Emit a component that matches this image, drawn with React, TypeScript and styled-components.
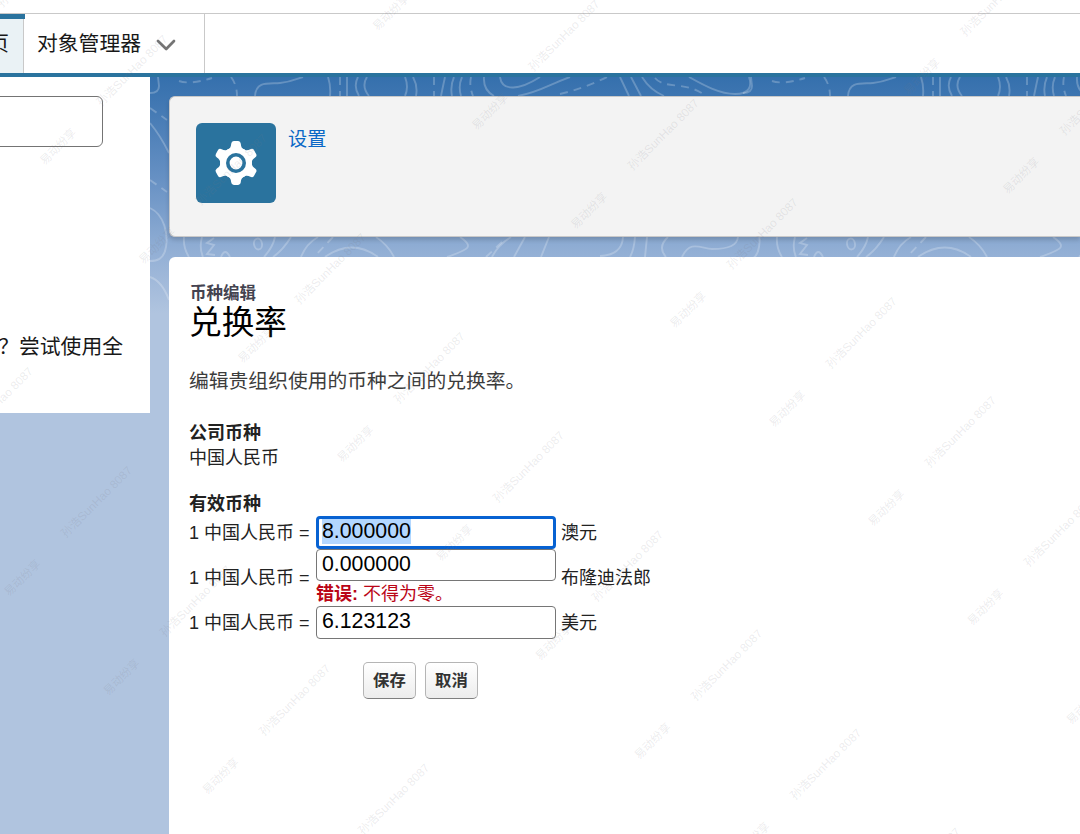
import React from 'react';
import styled, { createGlobalStyle, css } from 'styled-components';

const sans = '"Liberation Sans", "Noto Sans CJK SC", sans-serif';

const GlobalStyle = createGlobalStyle`
  * { box-sizing: border-box; }
  body {
    margin: 0;
    background: #fff;
    color: #181818;
    font-family: ${sans};
    overflow: hidden;
  }
`;

const Page = styled.div`
  position: relative;
  width: 1080px;
  height: 834px;
  display: flex;
  flex-direction: column;
  overflow: hidden;
`;

const TopStrip = styled.div`
  flex: none;
  height: 13px;
  background: #fff;
`;

const TabBar = styled.nav`
  flex: none;
  display: flex;
  height: 64px;
  border-top: 1px solid #c9c9c9;
  border-bottom: 4px solid #2a739e;
  background: #fff;
`;

const Tab = styled.div<{ $active?: boolean }>`
  display: flex;
  align-items: center;
  border-right: 1px solid #c9c9c9;
  font-size: 20.8px;
  line-height: 30px;
  white-space: nowrap;
  ${(p) =>
    p.$active
      ? css`
          position: relative;
          width: 24px;
          justify-content: flex-end;
          padding-right: 14px;
          background: #eaf2f5;
          flex: none;
          &::before {
            content: '';
            position: absolute;
            top: 0;
            left: 0;
            width: 25px;
            height: 5px;
            background: #2a739e;
          }
        `
      : css`
          width: 181px;
          padding: 0 28px 0 13px;
          justify-content: space-between;
        `}
`;

const Body = styled.div`
  position: relative;
  flex: 1;
  display: flex;
  min-height: 0;
  background: linear-gradient(180deg, #3570ad 0, #4077b2 25px, #6690c3 100px, #95b1d6 180px, #b0c4df 236px, #b0c4df 100%);
`;

const Contours = styled.svg`
  position: absolute;
  left: 0;
  top: 0;
  width: 1080px;
  height: 250px;
  fill: none;
  stroke: #fff;
  stroke-opacity: 0.23;
  stroke-width: 1.9;
`;

const Sidebar = styled.aside`
  position: relative;
  flex: none;
  width: 150px;
  height: 336px;
  padding-top: 19px;
  background: #fff;
  overflow: hidden;
`;

const SearchBox = styled.div`
  width: 123px;
  height: 51px;
  margin-left: -20px;
  border: 1px solid #747474;
  border-radius: 6px;
  background: #fff;
`;

const SidebarHint = styled.p`
  margin: 184px 0 0;
  display: flex;
  justify-content: flex-end;
  padding-right: 27px;
  font-size: 20.8px;
  line-height: 32px;
  white-space: nowrap;
`;

const Main = styled.main`
  position: relative;
  flex: 1;
  display: flex;
  flex-direction: column;
  gap: 20px;
  padding: 19px 0 0 19px;
`;

const SetupHeader = styled.header`
  flex: none;
  display: flex;
  gap: 12px;
  height: 141px;
  padding: 26px;
  border: 1px solid #c9c9c9;
  border-right: 0;
  border-radius: 6px 0 0 6px;
  background: #f3f3f3;
  box-shadow: 0 3px 4px rgba(0, 0, 0, 0.16);
`;

const SetupIcon = styled.div`
  display: flex;
  align-items: center;
  justify-content: center;
  width: 80px;
  height: 80px;
  border-radius: 6px;
  background: #2a739e;
`;

const SetupLink = styled.a`
  height: 34px;
  color: #0b68c6;
  font-size: 19.2px;
  line-height: 34px;
`;

const Content = styled.section`
  flex: 1;
  padding: 25px 20px 0;
  border-radius: 6px 0 0 0;
  background: #fff;
`;

const Eyebrow = styled.h2`
  margin: 0;
  padding-left: 1px;
  color: #444350;
  font-size: 16.5px;
  line-height: 22px;
`;

const Title = styled.h1`
  margin: 0;
  color: #000;
  font-size: 32.7px;
  font-weight: 400;
  line-height: 38px;
`;

const Description = styled.p`
  margin: 25px 0 0;
  color: #3c3c3c;
  font-size: 19.8px;
  line-height: 28px;
`;

const Field = styled.div<{ $top: number }>`
  margin-top: ${(p) => p.$top}px;
  color: #222;
  font-size: 18px;
  line-height: 25px;
`;

const RateTable = styled.div`
  display: grid;
  grid-template-columns: 127px 240px auto;
  align-items: center;
  margin-top: -1px;
  color: #222;
  font-size: 18px;
  line-height: 25px;
`;

const Label = styled.span`
  padding-top: 2px;
`;

const Suffix = styled.span`
  padding: 2px 0 0 5px;
`;

const RateInput = styled.div<{ $focused?: boolean; $height: number }>`
  height: ${(p) => p.$height}px;
  padding: ${(p) => (p.$focused ? '0 3px' : '2px 5px')};
  border: ${(p) => (p.$focused ? '3px solid #0762d2' : '1px solid #767676')};
  border-radius: 4px;
  background: #fff;
  color: #000;
  font-size: 21.3px;
  line-height: 25px;
`;

const Selected = styled.span`
  display: inline-block;
  height: 25px;
  background: #b3d7ff;
`;

const ErrorText = styled.div`
  height: 25px;
  color: #ba0517;
  line-height: 27px;
`;

const Actions = styled.div`
  display: flex;
  gap: 9px;
  padding: 23px 0 0 174px;
`;

const ActionButton = styled.button`
  width: 53px;
  height: 37px;
  padding: 0 0 2px;
  border: 1px solid #b5b5b5;
  border-bottom-color: #7f7f7f;
  border-radius: 5px;
  background: linear-gradient(#fff, #ededed);
  color: #333;
  font-family: ${sans};
  font-size: 16.4px;
  font-weight: 700;
  line-height: 24px;
`;

const Watermark = styled.svg`
  position: absolute;
  inset: 0;
  width: 1080px;
  height: 834px;
  pointer-events: none;
  fill: #787884;
  fill-opacity: 0.15;
  font-family: ${sans};
`;

const TILE = 593;

const solidLines = [
  'M150,93 Q159,93 159,86 L158,77',
  'M255,96 C256,80 270,84 280,83 C292,82 296,79 303,77',
  'M328,77 Q331,86 330,96',
  'M347,77 V96',
  'M358,77 Q353,86 359,96',
  'M367,77 Q361,86 369,96',
  'M405,77 Q409,87 405,96',
  'M413,77 Q418,86 416,96',
  'M445,77 Q443,86 441,96',
  'M454,77 Q450,86 452,96',
  'M462,77 Q458,86 461,96',
  'M484,77 Q483,90 494,96',
  'M500,77 C502,92 520,90 540,77',
  'M518,96 C540,92 550,84 570,77',
  'M620,77 L629,96',
  'M631,77 L641,96',
  'M642,77 Q650,90 664,96',
  'M689,77 C705,86 720,94 735,94 C750,94 752,86 749,77',
  'M150,123 Q160,135 169,153',
  'M150,208 C165,215 168,235 166,247 C164,260 156,261 150,261',
  'M150,277 Q162,281 169,300',
  'M184,237 Q183,248 189,257',
  'M202,237 Q199,248 203,257',
  'M214,238 L207,243 L214,245 L207,254 L215,255',
  'M221,257 Q225,247 230,257',
  'M275,237 Q273,247 264,257',
  'M291,237 Q283,250 273,257',
  'M318,237 Q306,244 301,257',
  'M325,257 Q352,238 378,257',
  'M376,237 Q388,245 394,257',
  'M460,237 C476,248 466,250 447,257',
  'M511,237 Q498,245 492,257',
  'M525,237 L514,257',
  'M549,237 L541,257',
  'M623,237 Q622,255 600,256',
  'M635,237 Q634,250 630,257',
  'M647,237 L645,257',
  'M668,237 Q657,247 666,257',
  'M682,257 C690,240 700,248 712,249 C730,249 737,245 738,237',
];

const dashedLines = [
  'M179,81 Q190,85 212,78',
  'M231,77 Q237,85 237,96',
  'M340,77 V96',
  'M434,77 V96',
  'M471,77 Q469,86 473,96',
  'M560,94 Q585,88 607,77',
  'M655,78 C665,90 685,80 706,96',
  'M150,108 L167,120',
  'M150,180 L167,192',
  'M333,237 L314,257',
  'M502,242 L486,257',
];

function ContourBackdrop() {
  return (
    <Contours viewBox="0 77 1080 250">
      <defs>
        <g id="contour-tile">
          {solidLines.map((d) => (
            <path key={d} d={d} />
          ))}
          {dashedLines.map((d) => (
            <path key={d} d={d} strokeDasharray="8 6" />
          ))}
          <ellipse cx="258" cy="244" rx="4" ry="5.5" transform="rotate(-10 258 244)" />
        </g>
      </defs>
      <use href="#contour-tile" />
      <use href="#contour-tile" x={TILE} />
    </Contours>
  );
}

interface Mark {
  x: number;
  y: number;
  size: number;
  text: string;
}

function buildMarks(): Mark[] {
  const marks: Mark[] = [];
  const origins = [
    { x: 231, y: 169.5, size: 11.7, text: '孙浩SunHao 8087' },
    { x: 256, y: 344.5, size: 11.4, text: '易动纷享' },
  ];
  for (const o of origins) {
    for (let col = -2; col <= 3; col++) {
      for (let row = -9; row <= 9; row++) {
        const x = o.x + col * 432 + row * 99.1;
        const y = o.y - col * 35 + row * 99.1;
        if (x > -38 && x < 1118 && y > -38 && y < 872) {
          marks.push({ x, y, size: o.size, text: o.text });
        }
      }
    }
  }
  return marks;
}

const marks = buildMarks();

function GearIcon() {
  const teeth = [0, 60, 120, 180, 240, 300];
  return (
    <svg width="44" height="46" viewBox="-22 -23 44 46">
      <g fill="#fff">
        {teeth.map((a) => (
          <path
            key={a}
            transform={`rotate(${a})`}
            d="M-8.5,-13.5 C-5.5,-14.5 -5,-17 -4.8,-19.3 Q-4.5,-22 -2.2,-22 H2.2 Q4.5,-22 4.8,-19.3 C5,-17 5.5,-14.5 8.5,-13.5 L6,-8 H-6 Z"
          />
        ))}
        <circle r="15.8" />
      </g>
      <circle r="8.2" fill="none" stroke="#2a739e" strokeWidth="3.6" />
    </svg>
  );
}

export default function App() {
  return (
    <Page>
      <GlobalStyle />
      <TopStrip />
      <TabBar>
        <Tab $active>主页</Tab>
        <Tab>
          对象管理器
          <svg width="20" height="14" viewBox="0 0 20 14" fill="none" stroke="#747474" strokeWidth="2.7" strokeLinecap="round" strokeLinejoin="round">
            <path d="M2,4 L10.2,12 L18,4" />
          </svg>
        </Tab>
      </TabBar>
      <Body>
        <ContourBackdrop />
        <Sidebar>
          <SearchBox />
          <SidebarHint>？尝试使用全</SidebarHint>
        </Sidebar>
        <Main>
          <SetupHeader>
            <SetupIcon>
              <GearIcon />
            </SetupIcon>
            <SetupLink>设置</SetupLink>
          </SetupHeader>
          <Content>
            <Eyebrow>币种编辑</Eyebrow>
            <Title>兑换率</Title>
            <Description>编辑贵组织使用的币种之间的兑换率。</Description>
            <Field $top={26}>
              <strong>公司币种</strong>
              <div>中国人民币</div>
            </Field>
            <Field $top={21}>
              <strong>有效币种</strong>
            </Field>
            <RateTable>
              <Label>1 中国人民币 =</Label>
              <RateInput $focused $height={33}>
                <Selected>8.000000</Selected>
              </RateInput>
              <Suffix>澳元</Suffix>
              <Label>1 中国人民币 =</Label>
              <div>
                <RateInput $height={32}>0.000000</RateInput>
                <ErrorText>
                  <strong>错误:</strong> 不得为零。
                </ErrorText>
              </div>
              <Suffix>布隆迪法郎</Suffix>
              <Label>1 中国人民币 =</Label>
              <RateInput $height={33}>6.123123</RateInput>
              <Suffix>美元</Suffix>
            </RateTable>
            <Actions>
              <ActionButton>保存</ActionButton>
              <ActionButton>取消</ActionButton>
            </Actions>
          </Content>
        </Main>
      </Body>
      <Watermark viewBox="0 0 1080 834">
        {marks.map((m) => (
          <text
            key={`${m.x}-${m.y}`}
            transform={`translate(${m.x} ${m.y}) rotate(-45)`}
            textAnchor="middle"
            fontSize={m.size}
            dy="4.2"
          >
            {m.text}
          </text>
        ))}
      </Watermark>
    </Page>
  );
}
